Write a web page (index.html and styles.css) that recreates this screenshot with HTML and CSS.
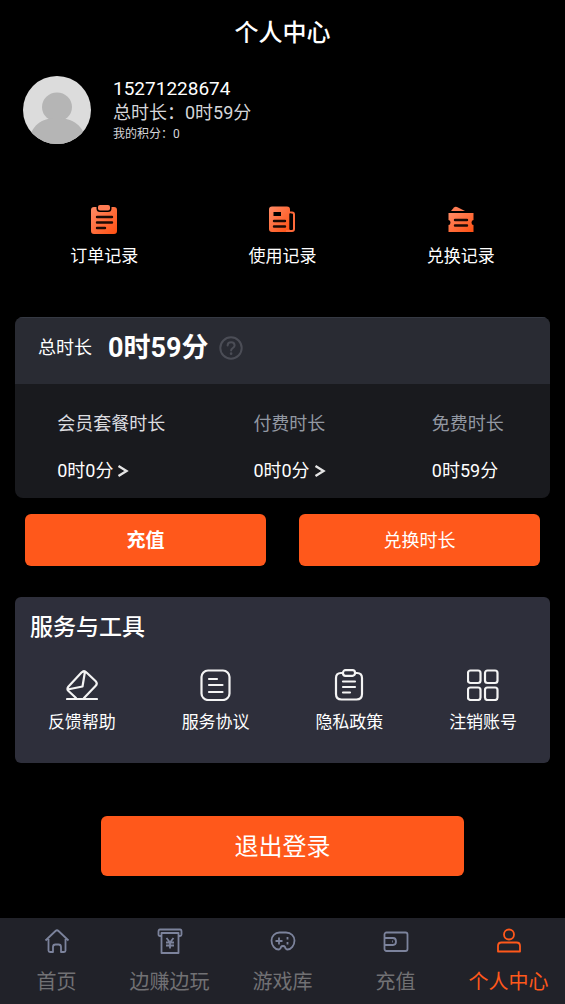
FILE: index.html
```html
<!DOCTYPE html>
<html lang="zh-CN">
<head>
<meta charset="utf-8">
<meta name="viewport" content="width=device-width, initial-scale=1">
<title>个人中心</title>
<link rel="stylesheet" href="styles.css">
</head>
<body>
<svg class="defs" width="0" height="0" aria-hidden="true">
  <defs>
    <linearGradient id="flame" x1="0" y1="0" x2="1" y2="1">
      <stop offset="0" stop-color="#ff8b66"/>
      <stop offset="1" stop-color="#ff5012"/>
    </linearGradient>
  </defs>
</svg>

<header class="topbar"><h1 class="title">个人中心</h1></header>

<main class="content">
  <section class="profile">
    <svg class="avatar" viewBox="0 0 68 68" role="img" aria-label="头像">
      <clipPath id="round"><circle cx="34" cy="34" r="34"/></clipPath>
      <g clip-path="url(#round)">
        <rect width="68" height="68" fill="#dcdcdc"/>
        <ellipse cx="34" cy="31" rx="15" ry="14.500" fill="#b5b5b5"/>
        <path d="M5 68C8 49 18 42 34 42s27 7 30 26z" fill="#b5b5b5"/>
      </g>
    </svg>
    <div class="profile-text">
      <p class="phone">15271228674</p>
      <p class="total">总时长：0时59分</p>
      <p class="points">我的积分：0</p>
    </div>
  </section>

  <nav class="records" aria-label="记录">
    <a class="record" href="#orders">
      <svg class="record-icon" viewBox="0 0 32 32">
        <path fill="url(#flame)" d="M6 4h2.500v1.500A3.500 3.500 0 0 0 12 9h8a3.500 3.500 0 0 0 3.500-3.500V4H26a3 3 0 0 1 3 3v21a3 3 0 0 1-3 3H6a3 3 0 0 1-3-3V7a3 3 0 0 1 3-3z"/>
        <rect x="10" y="2" width="12" height="5.500" rx="2" fill="#ff7c53"/>
        <path class="ink" d="M9 14h15M9 19.500h15M9 25h8"/>
      </svg>
      <span>订单记录</span>
    </a>
    <a class="record" href="#usage">
      <svg class="record-icon" viewBox="0 0 32 32">
        <rect x="3" y="3.500" width="21" height="25.500" rx="3" fill="url(#flame)"/>
        <path d="M23 9.500h3a2 2 0 0 1 2 2V26a2 2 0 0 1-2 2H20" fill="none" stroke="#ff6a3a" stroke-width="2"/>
        <path d="M24.200 10.500v16" stroke="#000" stroke-width="1.800"/>
        <rect x="7.500" y="9" width="7.500" height="4" fill="#000"/>
        <path class="ink" d="M8 18h11M8 23.500h11"/>
      </svg>
      <span>使用记录</span>
    </a>
    <a class="record" href="#redeem">
      <svg class="record-icon" viewBox="0 0 32 32">
        <path fill="#ff7b52" d="M6 8 9 4.500Q10 3.500 12 4L20 8z"/>
        <path fill="url(#flame)" d="M3.500 10h25v7a2 2.500 0 0 0 0 5v7h-25v-7a2 2.500 0 0 0 0-5z"/>
        <path class="ink" d="M10 17h12M10 22.500h12"/>
      </svg>
      <span>兑换记录</span>
    </a>
  </nav>

  <section class="duration">
    <div class="duration-head">
      <span class="duration-label">总时长</span>
      <strong class="duration-value">0时59分</strong>
      <button class="help" type="button" aria-label="时长说明">
        <svg viewBox="0 0 24 24" fill="none" stroke="#4b4d56" stroke-width="2" stroke-linecap="round">
          <circle cx="12" cy="12" r="10.700"/>
          <path d="M8.600 9.500c0-4.500 7-4.500 7 0 0 2.500-3.500 2.500-3.500 5"/>
          <path d="M12.100 17.600v.1" stroke-width="2.600"/>
        </svg>
      </button>
    </div>
    <div class="plans">
      <a class="plan" href="#member">
        <span class="plan-name plan-name-active">会员套餐时长</span>
        <span class="plan-value">0时0分<svg class="chevron" viewBox="0 0 12 14"><path d="M1.500 2l8 5-8 5"/></svg></span>
      </a>
      <a class="plan" href="#paid">
        <span class="plan-name">付费时长</span>
        <span class="plan-value">0时0分<svg class="chevron" viewBox="0 0 12 14"><path d="M1.500 2l8 5-8 5"/></svg></span>
      </a>
      <div class="plan">
        <span class="plan-name">免费时长</span>
        <span class="plan-value">0时59分</span>
      </div>
    </div>
  </section>

  <div class="actions">
    <button class="btn btn-strong" type="button">充值</button>
    <button class="btn" type="button">兑换时长</button>
  </div>

  <section class="services">
    <h2 class="services-title">服务与工具</h2>
    <div class="service-grid">
      <a class="service" href="#feedback">
        <svg class="service-icon" viewBox="0 0 32 32">
          <path d="M10 29 2.500 22Q.5 20 2.500 17.500L15.500 3.500Q18 1 20.500 3.500L29.500 12Q32 14.500 29.500 17L18 29M19 2.500 16.500 17.500 1.500 20.500M1 30h30"/>
        </svg>
        <span>反馈帮助</span>
      </a>
      <a class="service" href="#terms">
        <svg class="service-icon" viewBox="0 0 32 32">
          <rect x="1.500" y="1.500" width="28" height="29.500" rx="6.500"/>
          <path d="M9 10h8M9 16h13.500M9 23h13.500"/>
        </svg>
        <span>服务协议</span>
      </a>
      <a class="service" href="#privacy">
        <svg class="service-icon" viewBox="0 0 32 32">
          <rect x="10" y="1.200" width="12" height="5.600" rx="2.500"/>
          <path d="M10 4H8Q3 4 3 9v16q0 5.500 5.500 5.500h15Q29 30.500 29 25V9q0-5-5-5h-2M10 12.500h12M10 18h12M10 23.500h7"/>
        </svg>
        <span>隐私政策</span>
      </a>
      <a class="service" href="#delete">
        <svg class="service-icon" viewBox="0 0 32 32">
          <rect x="1" y="1.500" width="12.500" height="12.500" rx="2.500"/>
          <rect x="18" y="1.500" width="12.500" height="12.500" rx="2.500"/>
          <rect x="1" y="18.500" width="12.500" height="12.500" rx="2.500"/>
          <rect x="18" y="18.500" width="12.500" height="12.500" rx="2.500"/>
        </svg>
        <span>注销账号</span>
      </a>
    </div>
  </section>

  <button class="btn logout" type="button">退出登录</button>
</main>

<nav class="tabbar" aria-label="主导航">
  <a class="tab" href="#home">
    <svg class="tab-icon" viewBox="0 0 26 26"><path d="M1.500 12.500 11.500 3Q13 1.600 14.500 3l10 9.500M4.500 11v11.500q0 1.500 1.500 1.500h3v-5q0-2.500 2.500-2.500h3q2.500 0 2.500 2.500v5h3q1.500 0 1.500-1.500V11"/></svg>
    <span>首页</span>
  </a>
  <a class="tab" href="#earn">
    <svg class="tab-icon" viewBox="0 0 26 26"><path d="M4.500 8H3Q1.500 8 1.500 6.500v-3Q1.500 1.500 3 1.500h20q1.500 0 1.500 2v3Q24.500 8 23 8h-1.500M4.500 5h17v20h-17zM9.500 10l3.500 4.500 3.500-4.500M9 14.500h8M9 17.500h8M13 14.500v6"/></svg>
    <span>边赚边玩</span>
  </a>
  <a class="tab" href="#games">
    <svg class="tab-icon" viewBox="0 0 26 26"><path d="M9.500 4.500h6.500c5 0 8.500 3.500 8.500 8 0 5-3.500 9-7 9-1.200 0-2-.8-2.500-2.500q-.5-1-2-1t-2 1c-.5 1.700-1.300 2.500-2.500 2.500-3.500 0-7-4-7-9 0-4.500 3.500-8 8-8zM5.500 13h7M9 9.500v7M17.500 9v2.500M17.500 14v2.500"/></svg>
    <span>游戏库</span>
  </a>
  <a class="tab" href="#recharge">
    <svg class="tab-icon" viewBox="0 0 26 26"><rect x="1.500" y="4.500" width="23" height="18.500" rx="2"/><path d="M1.500 10h8.500q3 0 3 3.500T10 17H1.500M9 13.500h.8"/></svg>
    <span>充值</span>
  </a>
  <a class="tab tab-active" href="#me" aria-current="page">
    <svg class="tab-icon" viewBox="0 0 26 26"><circle cx="13" cy="6.500" r="5"/><path d="M2 23.500V18q0-3.500 3.500-3.500h15Q24 14.500 24 18v5.500z"/></svg>
    <span>个人中心</span>
  </a>
</nav>
</body>
</html>
```

FILE: styles.css
```css
* {
  box-sizing: border-box;
}

body {
  margin: 0;
  min-height: 100vh;
  display: flex;
  flex-direction: column;
  background: #000;
  color: #fff;
  font-family: Roboto, "Noto Sans CJK SC", sans-serif;
  font-size: 18px;
  line-height: 24px;
}

h1,
h2,
p {
  margin: 0;
}

a {
  color: inherit;
  text-decoration: none;
}

button {
  border: 0;
  padding: 0;
  background: none;
  color: inherit;
  font: inherit;
  cursor: pointer;
}

.defs {
  position: absolute;
}

.topbar {
  display: flex;
  justify-content: center;
  padding: 17px 16px 15px;
}

.title {
  font-size: 24px;
  font-weight: 500;
  line-height: 32px;
}

.content {
  display: flex;
  flex-direction: column;
  padding: 12px 15px 42px;
}

.profile {
  display: flex;
  align-items: center;
  gap: 22px;
  padding-left: 8px;
}

.avatar {
  width: 68px;
  height: 68px;
}

.phone {
  font-size: 19px;
}

.total {
  color: #d6d6da;
}

.points {
  color: #d6d6da;
  font-size: 12px;
  line-height: 18px;
}

.records {
  display: grid;
  grid-template-columns: repeat(3, 1fr);
  margin-top: 59px;
}

.record,
.service {
  display: flex;
  flex-direction: column;
  align-items: center;
  gap: 9px;
  font-size: 17px;
}

.record-icon,
.service-icon {
  width: 32px;
  height: 32px;
}

.ink {
  fill: none;
  stroke: #1c0a04;
  stroke-width: 2.4;
  stroke-linecap: round;
}

.duration {
  margin-top: 49px;
  border-radius: 8px;
  background: #191a1e;
  overflow: hidden;
}

.duration-head {
  display: flex;
  align-items: center;
  padding: 12px 23px 18px;
  border-top: 1px solid #353943;
  background: #292b33;
}

.duration-value {
  margin-left: 16px;
  font-size: 27px;
  font-weight: 700;
  line-height: 36px;
}

.help {
  display: flex;
  width: 24px;
  height: 24px;
  margin-left: 11px;
}

.plans {
  display: grid;
  grid-template-columns: repeat(3, 1fr);
  padding: 28px 0 15px;
}

.plan {
  display: grid;
  justify-content: center;
  gap: 23px;
  padding-left: 14px;
}

.plan-name {
  color: #9298a2;
}

.plan-name-active {
  color: #dcdde0;
}

.plan-value {
  display: flex;
  align-items: center;
  gap: 4px;
}

.chevron {
  width: 12px;
  height: 14px;
  fill: none;
  stroke: #e4e4e4;
  stroke-width: 2.4;
}

.actions {
  display: grid;
  grid-template-columns: 1fr 1fr;
  gap: 33px;
  margin-top: 16px;
  padding: 0 10px;
}

.btn {
  height: 52px;
  padding-top: 2px;
  border-radius: 6px;
  background: #ff581b;
}

.btn-strong {
  font-size: 19px;
  font-weight: 700;
}

.services {
  margin-top: 31px;
  padding: 15px 0 29px;
  border-radius: 6px;
  background: #2e2f3b;
}

.services-title {
  padding-left: 15px;
  font-size: 23px;
  font-weight: 500;
  line-height: 32px;
}

.service-grid {
  display: grid;
  grid-template-columns: repeat(4, 1fr);
  margin-top: 25px;
}

.service-icon {
  fill: none;
  stroke: #f4f4f4;
  stroke-width: 2.2;
  stroke-linecap: round;
  stroke-linejoin: round;
}

.logout {
  align-self: center;
  width: 68%;
  height: 60px;
  margin-top: 53px;
  font-size: 24px;
}

.tabbar {
  display: grid;
  grid-template-columns: repeat(5, 1fr);
  margin-top: auto;
  padding: 10px 0 8px;
  background: #212229;
}

.tab {
  display: flex;
  flex-direction: column;
  align-items: center;
  gap: 14px;
  color: #717174;
  font-size: 20px;
  line-height: 28px;
}

.tab-icon {
  width: 26px;
  height: 26px;
  fill: none;
  stroke: #7c839c;
  stroke-width: 1.8;
  stroke-linejoin: round;
}

.tab-active {
  color: #ff581b;
}

.tab-active .tab-icon {
  stroke: #ff581b;
}
```
